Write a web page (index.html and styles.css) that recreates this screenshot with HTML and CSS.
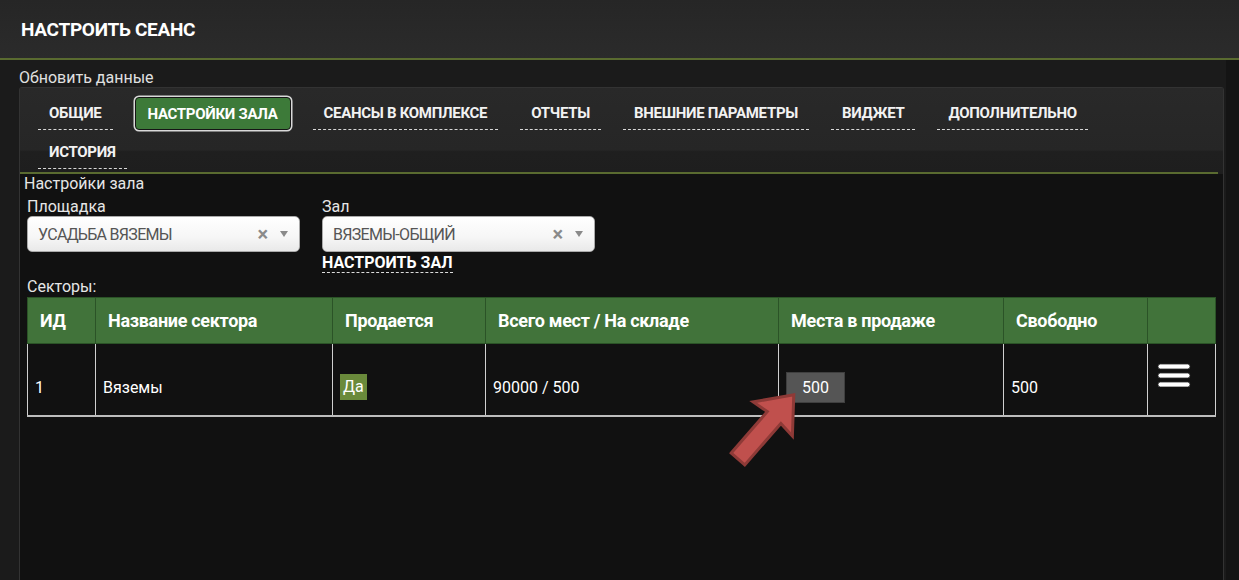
FILE: index.html
```html
<!DOCTYPE html>
<html lang="ru">
<head>
<meta charset="utf-8">
<title>Настроить сеанс</title>
<link rel="stylesheet" href="styles.css">
</head>
<body>
<header class="topbar"><h1>НАСТРОИТЬ СЕАНС</h1></header>
<main class="main">
  <div class="refresh">Обновить данные</div>
  <section class="panel">
    <div class="panel-head">
      <nav class="tabs">
        <a class="tab">ОБЩИЕ</a>
        <a class="tab active">НАСТРОЙКИ ЗАЛА</a>
        <a class="tab">СЕАНСЫ В КОМПЛЕКСЕ</a>
        <a class="tab">ОТЧЕТЫ</a>
        <a class="tab">ВНЕШНИЕ ПАРАМЕТРЫ</a>
        <a class="tab">ВИДЖЕТ</a>
        <a class="tab">ДОПОЛНИТЕЛЬНО</a>
        <a class="tab">ИСТОРИЯ</a>
      </nav>
    </div>
    <div class="panel-body">
      <div class="section-title">Настройки зала</div>
      <div class="form-row">
        <div class="field">
          <label class="label">Площадка</label>
          <div class="select"><span class="value">УСАДЬБА ВЯЗЕМЫ</span><span class="clear">×</span><span class="caret"></span></div>
        </div>
        <div class="field">
          <label class="label">Зал</label>
          <div class="select"><span class="value">ВЯЗЕМЫ-ОБЩИЙ</span><span class="clear">×</span><span class="caret"></span></div>
          <a class="hall-link">НАСТРОИТЬ ЗАЛ</a>
        </div>
      </div>
      <div class="sectors-label">Секторы:</div>
      <table class="sectors">
        <colgroup>
          <col class="c-id"><col class="c-name"><col class="c-sale"><col class="c-total"><col class="c-onsale"><col class="c-free"><col class="c-menu">
        </colgroup>
        <thead>
          <tr>
            <th>ИД</th>
            <th>Название сектора</th>
            <th>Продается</th>
            <th>Всего мест / На складе</th>
            <th>Места в продаже</th>
            <th>Свободно</th>
            <th></th>
          </tr>
        </thead>
        <tbody>
          <tr>
            <td>1</td>
            <td>Вяземы</td>
            <td><span class="badge">Да</span></td>
            <td>90000 / 500</td>
            <td><span class="qty">500</span></td>
            <td>500</td>
            <td class="menu-cell">
              <svg class="burger" width="34" height="24" viewBox="0 0 34 24">
                <rect x="1" y="1" width="32" height="5" rx="2.5" fill="#fff" stroke="#2a2a2a" stroke-width="0.8"/>
                <rect x="1" y="10" width="32" height="5" rx="2.5" fill="#fff" stroke="#2a2a2a" stroke-width="0.8"/>
                <rect x="1" y="19" width="32" height="5" rx="2.5" fill="#fff" stroke="#2a2a2a" stroke-width="0.8"/>
              </svg>
            </td>
          </tr>
        </tbody>
      </table>
    </div>
    <svg class="arrow" width="120" height="110" viewBox="0 0 120 110">
      <g transform="translate(38,89) rotate(-49)">
        <path d="M0,-9 L55,-9 L53,-26 L85,0 L53,26 L55,9 L0,9 Z" fill="#c0504d" stroke="#8e3a37" stroke-width="3" stroke-linejoin="miter"/>
      </g>
    </svg>
  </section>
</main>
</body>
</html>
```
FILE: styles.css
```css
html, body {
  margin: 0;
  padding: 0;
}
body {
  background: #141414;
  font-family: Roboto, "Liberation Sans", Arial, sans-serif;
  color: #e6e6e6;
  width: 1239px;
  height: 580px;
  overflow: hidden;
}
.topbar {
  height: 58px;
  background: linear-gradient(180deg, #262626 0%, #2b2b2b 100%);
  border-bottom: 2px solid #5a6b30;
  display: flex;
  align-items: center;
  padding-left: 21px;
}
.topbar h1 {
  margin: 0;
  font-size: 19px;
  font-weight: 700;
  color: #fff;
  letter-spacing: -0.3px;
}
.main {
  width: 1226px;
  box-sizing: border-box;
  background: #1b1b1b;
  padding: 0 2px 0 19px;
}
.refresh {
  font-size: 16px;
  line-height: 19px;
  padding-top: 8px;
  height: 19px;
  color: #e0e0e0;
}
.panel {
  position: relative;
  border: 1px solid #333;
  border-bottom: none;
  border-radius: 3px 3px 0 0;
  background: #111;
  min-height: 500px;
}
.panel-head {
  background: linear-gradient(180deg, #292929 0%, #262626 72%, #1f1f1f 74%, #1e1e1e 100%);
  padding-top: 9px;
}
.tabs {
  display: flex;
  flex-wrap: wrap;
  column-gap: 22px;
  row-gap: 6px;
  padding: 0 110px 3px 18px;
  margin-right: 5px;
  border-bottom: 2px solid #5a6b30;
}
.tab {
  height: 32px;
  display: flex;
  align-items: center;
  padding: 0 11px;
  border-bottom: 1px dashed #d8d8d8;
  font-size: 15px;
  font-weight: 700;
  letter-spacing: -0.3px;
  color: #f2f2f2;
  cursor: pointer;
}
.tab.active {
  height: 31px;
  padding: 0 12px;
  border: 1px solid #151515;
  border-radius: 4px;
  background: #3d7a39;
  box-shadow: 0 0 0 1.5px #d9d9d9;
  color: #fff;
}
.panel-body {
  padding: 0 8px 0 7px;
}
.section-title {
  font-size: 16px;
  line-height: 19px;
  margin-left: -3px;
  color: #e6e6e6;
}
.form-row {
  display: flex;
  align-items: flex-start;
  gap: 22px;
  margin-top: 4px;
}
.field {
  display: flex;
  flex-direction: column;
  align-items: flex-start;
}
.label {
  font-size: 16px;
  line-height: 19px;
  color: #e6e6e6;
}
.select {
  width: 273px;
  height: 36px;
  box-sizing: border-box;
  border: 1px solid #aaa;
  border-radius: 5px;
  background: linear-gradient(180deg, #ffffff 0%, #f6f6f6 60%, #e9e9e9 100%);
  display: flex;
  align-items: center;
  padding: 0 11px 0 10px;
}
.select .value {
  flex: 1;
  font-size: 16px;
  color: #555;
  letter-spacing: -0.7px;
}
.select .clear {
  font-size: 20px;
  font-weight: 700;
  color: #8a8a8a;
  line-height: 1;
  margin-right: 12px;
}
.select .caret {
  width: 0;
  height: 0;
  border-left: 4px solid transparent;
  border-right: 4px solid transparent;
  border-top: 6px solid #8a8a8a;
}
.hall-link {
  margin-top: 2px;
  font-size: 16px;
  font-weight: 700;
  line-height: 18px;
  letter-spacing: 0;
  color: #fff;
  border-bottom: 1px dashed #ddd;
}
.sectors-label {
  margin-top: 4px;
  font-size: 16px;
  line-height: 19px;
  color: #e6e6e6;
}
.sectors {
  margin-top: 1px;
  width: 1188px;
  table-layout: fixed;
  border-collapse: collapse;
  border-bottom: 2px solid #bdbdbd;
}
.c-id { width: 68px; }
.c-name { width: 237px; }
.c-sale { width: 153px; }
.c-total { width: 293px; }
.c-onsale { width: 225px; }
.c-free { width: 144px; }
.c-menu { width: 68px; }
.sectors th {
  height: 45px;
  padding: 0 12px;
  background: #41733a;
  border: 1px solid #2b5327;
  text-align: left;
  font-size: 18px;
  font-weight: 700;
  letter-spacing: -0.3px;
  color: #fff;
}
.sectors tbody tr {
  height: 72px;
}
.sectors td {
  padding: 16px 7px 0;
  border: 1px solid #d0d0d0;
  vertical-align: middle;
  font-size: 16px;
  font-weight: 400;
  color: #fff;
}
.badge {
  display: inline-block;
  background: #6a8a3b;
  color: #fff;
  padding: 0 3px;
  line-height: 26px;
}
.qty {
  display: inline-block;
  width: 57px;
  height: 29px;
  line-height: 29px;
  text-align: center;
  background: #555;
  border: 1px solid #3f3f3f;
  color: #fff;
}
.sectors td.menu-cell {
  vertical-align: top;
  padding: 19px 0 0 9px;
}
.burger {
  display: block;
}
.arrow {
  position: absolute;
  left: 680px;
  top: 282px;
}
```
